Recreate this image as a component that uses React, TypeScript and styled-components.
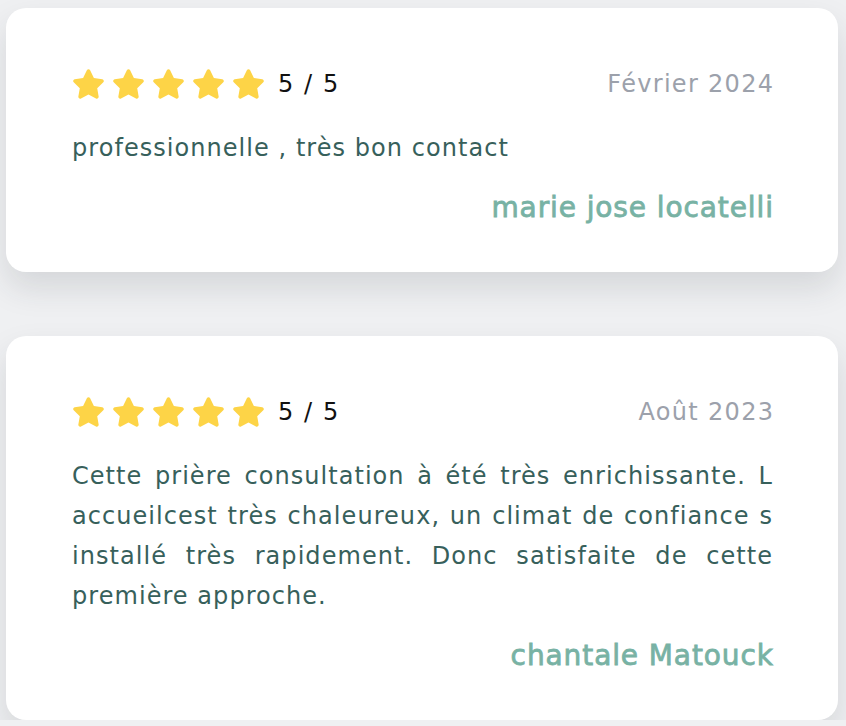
import React from "react";
import styled, { createGlobalStyle } from "styled-components";

const Global = createGlobalStyle`
  html, body { margin: 0; padding: 0; background: #eff0f2; }
  * { box-sizing: border-box; }
`;

const FONT = '"DejaVu Sans", "Noto Sans", sans-serif';

const Page = styled.div`
  display: flex;
  flex-direction: column;
  gap: 64px;
  padding: 8px 8px 0 6px;
  width: 846px;
`;

const Card = styled.div`
  background: #ffffff;
  border-radius: 20px;
  padding: 56px 65px 44px 66px;
  box-shadow: 0 16px 32px rgba(40, 45, 55, 0.13);
`;

const Header = styled.div`
  display: flex;
  align-items: center;
  justify-content: space-between;
  height: 40px;
`;

const Rating = styled.div`
  display: flex;
  align-items: center;
  gap: 7px;
`;

const Score = styled.span`
  margin-left: 6px;
  font-family: ${FONT};
  font-size: 24px;
  letter-spacing: 1.6px;
  color: #111;
`;

const DateText = styled.span`
  font-family: ${FONT};
  font-size: 24px;
  letter-spacing: 1.3px;
  margin-right: -1.3px;
  color: #9ca1ab;
`;

const Body = styled.p<{ $justify?: boolean }>`
  margin: 24px 0 0 0;
  font-family: ${FONT};
  font-size: 24px;
  letter-spacing: 1.05px;
  line-height: 40px;
  color: #37605b;
  text-align: ${(p) => (p.$justify ? "justify" : "left")};
`;

const Author = styled.div`
  margin-top: 20px;
  text-align: right;
  font-family: ${FONT};
  font-size: 28px;
  letter-spacing: 0.9px;
  margin-right: -0.9px;
  line-height: 40px;
  color: #78b2a4;
  -webkit-text-stroke: 0.8px #78b2a4;
`;

const Star = () => (
  <svg width="33" height="30" viewBox="0 0 576 512">
    <path
      fill="#fdd447"
      d="M259.3 17.8L194 150.2 47.9 171.5c-26.2 3.8-36.7 36.1-17.7 54.6l105.7 103-25 145.5c-4.5 26.3 23.2 46 46.4 33.7L288 439.6l130.7 68.7c23.2 12.2 50.9-7.4 46.4-33.7l-25-145.5 105.7-103c19-18.5 8.5-50.8-17.7-54.6L382 150.2 316.7 17.8c-11.7-23.6-45.6-23.9-57.4 0z"
    />
  </svg>
);

type Review = { date: string; text: string; author: string; justify?: boolean };

const reviews: Review[] = [
  { date: "Février 2024", text: "professionnelle , très bon contact", author: "marie jose locatelli" },
  {
    date: "Août 2023",
    text:
      "Cette prière consultation à été très enrichissante. L accueilcest très chaleureux, un climat de confiance s installé très rapidement. Donc satisfaite de cette première approche.",
    author: "chantale Matouck",
    justify: true,
  },
];

export default function App() {
  return (
    <>
      <Global />
      <Page>
        {reviews.map((r) => (
          <Card key={r.author}>
            <Header>
              <Rating>
                {[0, 1, 2, 3, 4].map((i) => (
                  <Star key={i} />
                ))}
                <Score>5 / 5</Score>
              </Rating>
              <DateText>{r.date}</DateText>
            </Header>
            <Body $justify={r.justify}>{r.text}</Body>
            <Author>{r.author}</Author>
          </Card>
        ))}
      </Page>
    </>
  );
}
